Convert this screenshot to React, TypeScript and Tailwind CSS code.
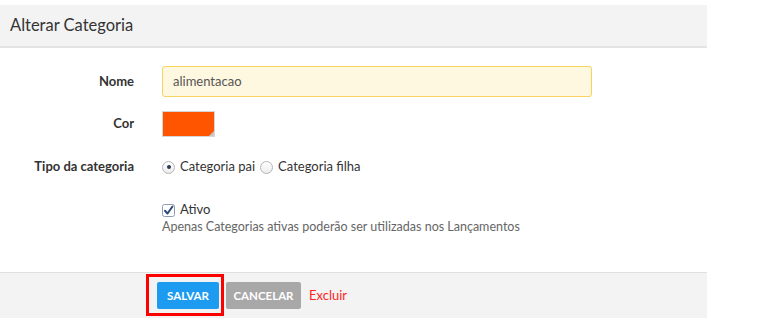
import React from "react";

const font = { fontFamily: "Lato, 'Open Sans', sans-serif" };

function Radio({ checked }: { checked?: boolean }) {
  return (
    <span className="inline-flex h-[13px] w-[13px] items-center justify-center rounded-full border border-[#b5b5b5] bg-gradient-to-b from-white to-[#ececec]">
      {checked && <span className="h-[4px] w-[4px] rounded-full bg-[#2a3a55]" />}
    </span>
  );
}

function Checkbox() {
  return (
    <svg width="13" height="13" viewBox="0 0 13 13">
      <rect x="0.5" y="0.5" width="12" height="12" rx="2" fill="#fff" stroke="#8e9bb3" />
      <path d="M3 6.8 L5.5 9.5 L10.5 2.5" fill="none" stroke="#2b4a78" strokeWidth="2" strokeLinecap="round" strokeLinejoin="round" />
    </svg>
  );
}

export default function App() {
  return (
    <div className="h-[324px] w-[757px] bg-white pt-[5px]" style={font}>
      <div className="w-[707px]">
        <div className="flex h-[43px] items-center border-b-2 border-[#e4e4e4] bg-[#f3f3f3] pl-[10px] text-[16.5px] text-[#333]">
          Alterar Categoria
        </div>

        <div className="pt-[18px]">
          <div className="flex items-center">
            <label className="w-[135px] pr-px text-right text-[13px] font-bold text-[#333]">Nome</label>
            <div className="ml-[27px] flex h-[31px] w-[430px] items-center rounded-[3px] border border-[#f5d35c] bg-[#fff8e0] px-[10px] text-[13px] text-[#555]">
              alimentacao
            </div>
          </div>

          <div className="mt-[14px] flex items-center">
            <label className="w-[135px] pr-px text-right text-[13px] font-bold text-[#333]">Cor</label>
            <div className="relative ml-[27px] h-[26px] w-[53px] border border-[#d6d6d6] bg-[#ff5500]">
              <span className="absolute bottom-0 right-0 h-0 w-0 border-b-[5px] border-l-[5px] border-b-[#c8c8c8] border-l-transparent" />
            </div>
          </div>

          <div className="mt-[22px] flex h-[16px] items-center">
            <label className="w-[135px] pr-px text-right text-[13px] font-bold text-[#333]">Tipo da categoria</label>
            <div className="ml-[27px] flex items-center text-[13px] text-[#333]">
              <Radio checked />
              <span className="ml-[5px]">Categoria pai</span>
              <span className="ml-[5px] flex"><Radio /></span>
              <span className="ml-[5px]">Categoria filha</span>
            </div>
          </div>

          <div className="ml-[162px] mt-[26px]">
            <div className="flex h-[18px] items-center text-[13px] text-[#333]">
              <Checkbox />
              <span className="ml-[5px]">Ativo</span>
            </div>
            <div className="flex h-[16px] items-center text-[12.5px] text-[#666]">
              Apenas Categorias ativas poderão ser utilizadas nos Lançamentos
            </div>
          </div>
        </div>

        <div className="mt-[37px] flex h-[46px] items-start border-t border-[#e0e0e0] bg-[#f3f3f3] pl-[157px] pt-[9px]">
          <div className="relative">
            <button className="h-[27px] w-[62px] rounded-[2px] bg-[#1d9bf0] text-[11.5px] font-bold text-white">SALVAR</button>
            <span className="pointer-events-none absolute -bottom-[7px] -left-[11px] -right-[5px] -top-[8px] border-[3px] border-[#ff0000]" />
          </div>
          <button className="ml-[7px] h-[27px] w-[75px] rounded-[2px] bg-[#a8a8a8] text-[11.5px] font-bold text-white">CANCELAR</button>
          <span className="ml-[8px] flex h-[27px] items-center text-[13px] text-[#ff1f1f]">Excluir</span>
        </div>
      </div>
    </div>
  );
}
